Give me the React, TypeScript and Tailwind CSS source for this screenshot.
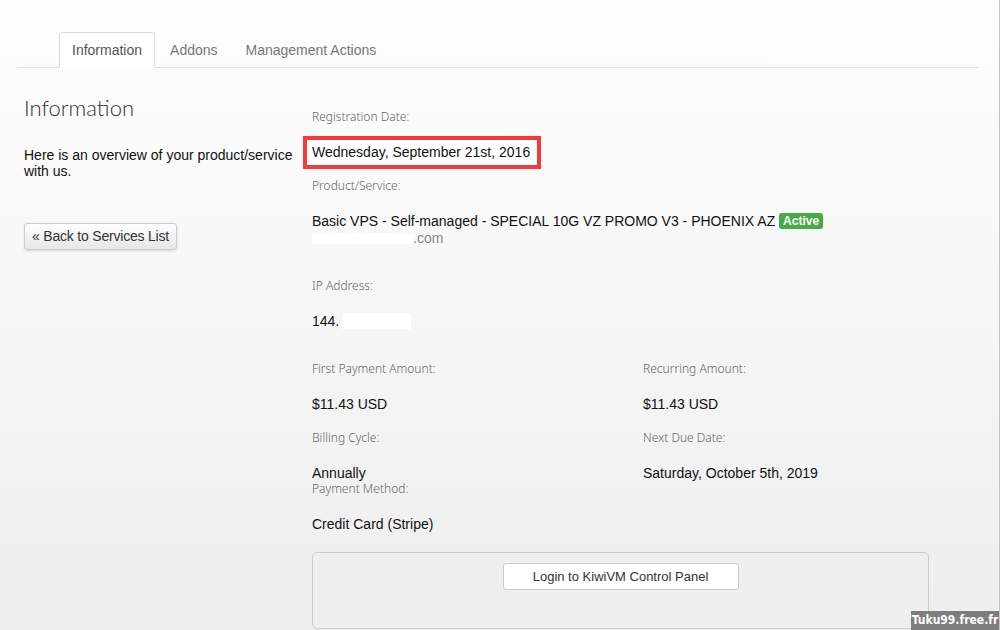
const arial = "font-['Liberation_Sans',Arial,sans-serif]";
const light = "font-['Noto_Sans',sans-serif] font-light";

const Label = ({ children, className = "" }: { children: React.ReactNode; className?: string }) => (
  <div className={`${light} text-[12px] leading-4 text-[#666] ${className}`}>{children}</div>
);

const Value = ({ children, className = "" }: { children: React.ReactNode; className?: string }) => (
  <div className={`${arial} text-[14px] leading-[18px] text-[#111] mt-[18px] ${className}`}>{children}</div>
);

const tabs = ["Information", "Addons", "Management Actions"];

export default function App() {
  return (
    <div className="relative w-[1000px] h-[630px] overflow-hidden border-r border-[#c4c4c4] bg-gradient-to-b from-[#fefefe] to-[#eeeeee]">
      <div className="ml-[18px] w-[960px] pt-8">
        {/* Tabs */}
        <ul className={`${arial} flex pl-[41px] border-b border-[#dddddd] text-[14px] leading-4`}>
          {tabs.map((t, i) => (
            <li
              key={t}
              className={
                i === 0
                  ? "-mb-px mr-[2px] px-3 py-[9px] bg-white border border-[#dddddd] border-b-white rounded-t text-[#555]"
                  : "-mb-px mr-[2px] px-3 py-[9px] border border-transparent text-[#777]"
              }
            >
              {t}
            </li>
          ))}
        </ul>

        <div className="flex">
          {/* Left column */}
          <div className="w-[294px] pl-[6px] pt-[26px]">
            <h2 className="font-['Lato',sans-serif] font-light text-[22px] leading-7 text-[#333]">Information</h2>
            <p className={`${arial} mt-[25px] text-[14px] leading-4 text-[#111]`}>
              Here is an overview of your product/service with us.
            </p>
            <button
              className={`${arial} mt-[44px] h-[27px] px-[7px] text-[14px] tracking-[-0.2px] text-[#333] border border-[#cccccc] rounded-[3px] bg-gradient-to-b from-white to-[#e6e6e6] shadow-sm`}
            >
              « Back to Services List
            </button>
          </div>

          {/* Right column */}
          <div className="w-[617px] pt-[41px]">
            <Label>Registration Date:</Label>
            <Value className="relative h-[18px]">
              <span className="absolute -left-[9px] -top-[7px] whitespace-nowrap border-4 border-[#f63a3a] bg-white pl-[5px] pr-[7px] py-[3px] leading-[19px]">
                Wednesday, September 21st, 2016
              </span>
            </Value>

            <Label className="mt-[17px]">Product/Service:</Label>
            <Value>
              Basic VPS - Self-managed - SPECIAL 10G VZ PROMO V3 - PHOENIX AZ{" "}
              <span className="inline-block align-[1px] rounded-[3px] bg-[#47a947] px-[4px] text-[12px] font-bold leading-4 text-white">
                Active
              </span>
            </Value>
            <div className={`${arial} flex items-center text-[14px] leading-4 text-[#888]`}>
              <span className="inline-block w-[101px] h-[11px] bg-white" />
              <span>.com</span>
            </div>

            <Label className="mt-8">IP Address:</Label>
            <Value className="flex items-center">
              <span>144.</span>
              <span className="inline-block ml-[3px] w-[69px] h-4 bg-white" />
            </Value>

            <div className="grid grid-cols-[331px_1fr] mt-[31px]">
              <div>
                <Label>First Payment Amount:</Label>
                <Value>$11.43 USD</Value>
                <Label className="mt-[17px]">Billing Cycle:</Label>
                <Value>Annually</Value>
                <Label className="-mt-px">Payment Method:</Label>
                <Value>Credit Card (Stripe)</Value>
              </div>
              <div>
                <Label>Recurring Amount:</Label>
                <Value>$11.43 USD</Value>
                <Label className="mt-[17px]">Next Due Date:</Label>
                <Value>Saturday, October 5th, 2019</Value>
              </div>
            </div>

            <div className="mt-[19px] h-[77px] border border-[#cccccc] rounded-[5px] bg-[#efefef] flex justify-center pt-[10px]">
              <button
                className={`${arial} h-[27px] w-[236px] text-[13px] text-[#333] bg-white border border-[#cccccc] rounded-[3px]`}
              >
                Login to KiwiVM Control Panel
              </button>
            </div>
          </div>
        </div>
      </div>

      <div className="absolute right-0 bottom-0 w-[88px] h-[19px] bg-[#7d7d7d] text-white font-['DejaVu_Sans_Condensed','DejaVu_Sans',sans-serif] [font-stretch:condensed] font-bold text-[12px] leading-[19px] text-center">
        Tuku99.free.fr
      </div>
    </div>
  );
}
